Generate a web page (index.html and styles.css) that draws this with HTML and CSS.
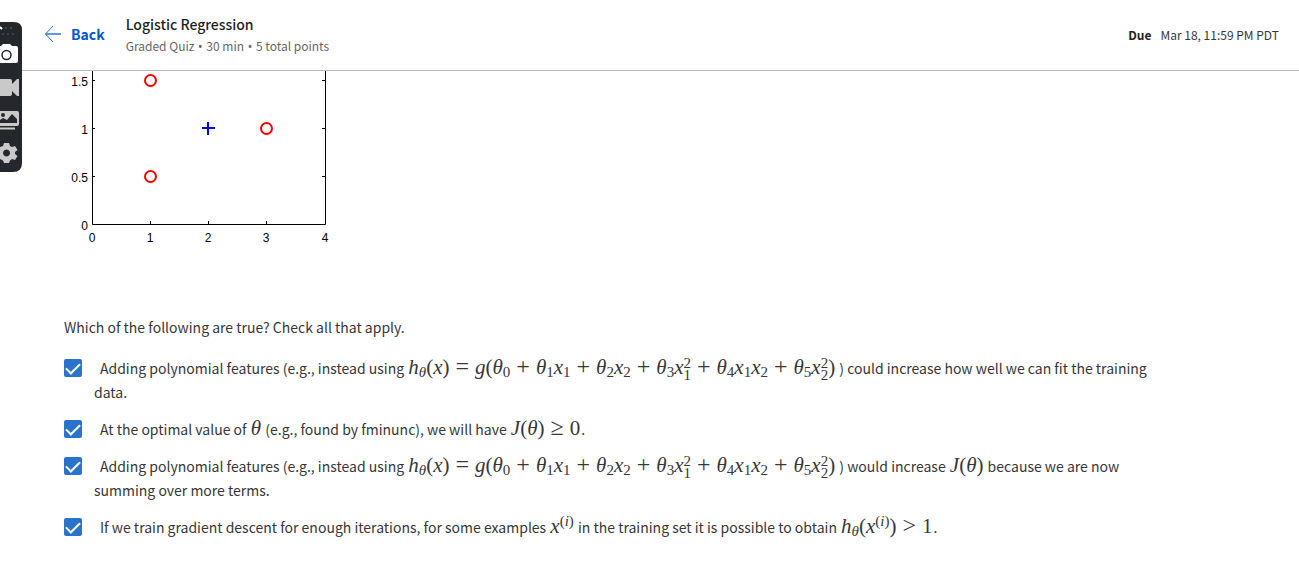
FILE: index.html
```
<!DOCTYPE html>
<html lang="en">
<head>
<meta charset="utf-8">
<title>Logistic Regression</title>
<link rel="stylesheet" href="styles.css">
</head>
<body>
<header class="header">
  <a class="back" href="#">
    <svg class="back-arrow" viewBox="0 0 18 18" aria-hidden="true"><path d="M9 1L1.500 9L9 17"/><path d="M1.500 9H17" stroke-width="1.500"/></svg>
    Back
  </a>
  <div class="heading">
    <h1 class="title">Logistic Regression</h1>
    <p class="meta">Graded Quiz <span class="dot">•</span> 30 min <span class="dot">•</span> 5 total points</p>
  </div>
  <p class="due"><strong class="due-label">Due</strong>Mar 18, 11:59 PM PDT</p>
</header>

<main class="quiz">
  <svg class="plot" viewBox="0 0 276 176" role="img" aria-label="Training examples">
    <g class="axes">
      <path d="M28.5 0V153.500H261.500V0"/>
      <path d="M28 9.500h3M28 57.500h3M28 105.500h3M262 9.500h-4M262 57.500h-4M262 105.500h-4M86.500 154v-4M144.500 154v-4M202.500 154v-4"/>
    </g>
    <g class="ticks" text-anchor="end">
      <text x="24" y="15">1.5</text><text x="24" y="63">1</text><text x="24" y="111">0.5</text><text x="24" y="159">0</text>
    </g>
    <g class="ticks" text-anchor="middle">
      <text x="28" y="171">0</text><text x="86" y="171">1</text><text x="144" y="171">2</text><text x="202" y="171">3</text><text x="261" y="171">4</text>
    </g>
    <g class="negative">
      <circle cx="86.500" cy="9.500" r="5.500"/><circle cx="202.500" cy="57.500" r="5.500"/><circle cx="86.500" cy="105.500" r="5.500"/>
    </g>
    <path class="positive" d="M138 57h13M144 51v13"/>
  </svg>

  <fieldset class="question">
    <legend class="prompt">Which of the following are true? Check all that apply.</legend>
    <div class="option">
      <input class="check" type="checkbox" id="a" checked>
      <label class="answer" for="a">Adding polynomial features (e.g., instead using <span class="math"><i>h</i><i class="sub">θ</i>(<i>x</i>)<b class="op">=</b><i>g</i>(<i>θ</i><span class="sub">0</span><b class="op">+</b><i>θ</i><span class="sub">1</span><i>x</i><span class="sub">1</span><b class="op">+</b><i>θ</i><span class="sub">2</span><i>x</i><span class="sub">2</span><b class="op">+</b><i>θ</i><span class="sub">3</span><i>x</i><span class="both"><span>2</span><span>1</span></span><b class="op">+</b><i>θ</i><span class="sub">4</span><i>x</i><span class="sub">1</span><i>x</i><span class="sub">2</span><b class="op">+</b><i>θ</i><span class="sub">5</span><i>x</i><span class="both"><span>2</span><span>2</span></span>)</span> ) could increase how well we can fit the training data.</label>
    </div>
    <div class="option">
      <input class="check" type="checkbox" id="b" checked>
      <label class="answer" for="b">At the optimal value of <span class="math"><i>θ</i></span> (e.g., found by fminunc), we will have <span class="math"><i>J</i>(<i>θ</i>)<b class="op">≥</b>0</span>.</label>
    </div>
    <div class="option">
      <input class="check" type="checkbox" id="c" checked>
      <label class="answer" for="c">Adding polynomial features (e.g., instead using <span class="math"><i>h</i><i class="sub">θ</i>(<i>x</i>)<b class="op">=</b><i>g</i>(<i>θ</i><span class="sub">0</span><b class="op">+</b><i>θ</i><span class="sub">1</span><i>x</i><span class="sub">1</span><b class="op">+</b><i>θ</i><span class="sub">2</span><i>x</i><span class="sub">2</span><b class="op">+</b><i>θ</i><span class="sub">3</span><i>x</i><span class="both"><span>2</span><span>1</span></span><b class="op">+</b><i>θ</i><span class="sub">4</span><i>x</i><span class="sub">1</span><i>x</i><span class="sub">2</span><b class="op">+</b><i>θ</i><span class="sub">5</span><i>x</i><span class="both"><span>2</span><span>2</span></span>)</span> ) would increase <span class="math"><i>J</i>(<i>θ</i>)</span> because we are now summing over more terms.</label>
    </div>
    <div class="option">
      <input class="check" type="checkbox" id="d" checked>
      <label class="answer" for="d">If we train gradient descent for enough iterations, for some examples <span class="math"><i>x</i><span class="sup">(<i>i</i>)</span></span> in the training set it is possible to obtain <span class="math"><i>h</i><i class="sub">θ</i>(<i>x</i><span class="sup">(<i>i</i>)</span>)<b class="op">&gt;</b>1</span>.</label>
    </div>
  </fieldset>
</main>

<aside class="recorder" aria-label="Screen recorder">
  <svg viewBox="0 0 22 150" aria-hidden="true">
    <path fill="#24282c" d="M0 0H14Q22 0 22 8V141Q22 150 13 150H0Z"/>
    <g fill="#454a4e"><circle cx="6" cy="6" r="1"/><circle cx="11" cy="6" r="1"/><circle cx="3" cy="12" r="1"/><circle cx="8" cy="12" r="1"/><circle cx="13" cy="12" r="1"/></g>
    <path d="M0 5L2 7" stroke="#fff" stroke-width="2"/>
    <path fill="#fff" d="M0 24H1L3 22H10L12 24H16Q18 24 18 26V39Q18 41 16 41H0Z"/>
    <circle cx="6.500" cy="33" r="4.500" fill="#fff" stroke="#24282c" stroke-width="1.500"/>
    <path fill="#c9c9c9" d="M0 57H10Q12 57 12 59V62L17 57H19V74H17L12 69V72Q12 74 10 74H0Z"/>
    <path fill="#c9c9c9" d="M0 89H17Q19 89 19 91V102Q19 104 17 104H0Z"/>
    <path fill="#24282c" d="M0 98L3 96L7 98L12 92L17 97V101H0Z"/>
    <circle cx="3" cy="93" r="2" fill="#24282c"/>
    <path d="M0 106.500H15" stroke="#c9c9c9" stroke-width="2"/>
    <path fill="#c9c9c9" fill-rule="evenodd" d="M4 121H9L10 124L12 125L15 124L17.500 128L15 130V132L17.500 134L15 138L12 137L10 138.500L9 141H4L3 138.500L0 137V125L3 124ZM6.500 127.500a3.500 3.500 0 1 0 .1 0Z"/>
  </svg>
</aside>
</body>
</html>
```
FILE: styles.css
```
* { box-sizing: border-box; }
body {
  margin: 0;
  background: #fff;
  color: #373737;
  font-family: "Noto Sans CJK SC", "Noto Sans", sans-serif;
  font-size: 14px;
  line-height: 24px;
}
.header {
  display: flex;
  align-items: center;
  height: 71px;
  padding: 0 20px 0 44px;
  border-bottom: 1px solid #bdbdbd;
}
.back {
  display: flex;
  align-items: center;
  gap: 9px;
  margin-right: 21px;
  padding-bottom: 2px;
  color: #0056d2;
  font-weight: 700;
  text-decoration: none;
}
.back-arrow { width: 18px; height: 18px; fill: none; stroke: #2a73e0; stroke-width: 1; }
.heading { flex: 1; }
.title { margin: 0; color: #1f1f1f; font-size: 14px; font-weight: 500; line-height: 22px; }
.meta { margin: 0; color: #666; font-size: 12px; line-height: 22px; }
.dot { margin: 0 1px; font-family: "Noto Sans", sans-serif; line-height: 1px; }
.due { margin: 0; font-size: 12px; }
.due-label { margin-right: 9px; color: #1f1f1f; }
.quiz { padding: 0 130px 20px 64px; }
.plot { display: block; width: 276px; height: 176px; }
.axes { fill: none; stroke: #000; }
.ticks { fill: #000; font-family: "Liberation Sans", Arial, sans-serif; font-size: 12px; }
.negative { fill: none; stroke: #f00; stroke-width: 2; }
.positive { stroke: #00f; stroke-width: 2; }
.question { margin: 68px 0 0; padding: 0; border: 0; min-width: 0; }
.prompt { padding: 0; margin-bottom: 17px; }
.option { display: flex; align-items: flex-start; gap: 12px; margin-bottom: 13px; }
.check {
  display: grid;
  place-items: center;
  flex: none;
  width: 18px;
  height: 18px;
  margin: 3px 0 0;
  appearance: none;
  border-radius: 2px;
  background: #2a73cc;
}
.check::before {
  content: "";
  width: 6px;
  height: 12px;
  margin-bottom: 3px;
  border: solid #fff;
  border-width: 0 2px 2px 0;
  transform: rotate(45deg);
}
.answer { flex: 1; text-indent: 6px; }
.math {
  margin: 0 1px;
  font-family: "Liberation Serif", "Times New Roman", serif;
  font-size: 21px;
  line-height: 1px;
  text-indent: 0;
  white-space: nowrap;
}
.op { margin: 0 6px; font-size: 24px; font-weight: 400; line-height: 1px; }
.sub, .sup { font-size: 15px; line-height: 1px; }
.sub { vertical-align: -3px; }
.sup { vertical-align: 7px; }
.both {
  display: inline-flex;
  flex-direction: column;
  height: 24px;
  margin: -4px 0;
  vertical-align: 6px;
  font-size: 15px;
  line-height: 12px;
  text-indent: 0;
}
.recorder { position: absolute; top: 22px; left: 0; width: 22px; height: 150px; }
.recorder svg { display: block; }
```
